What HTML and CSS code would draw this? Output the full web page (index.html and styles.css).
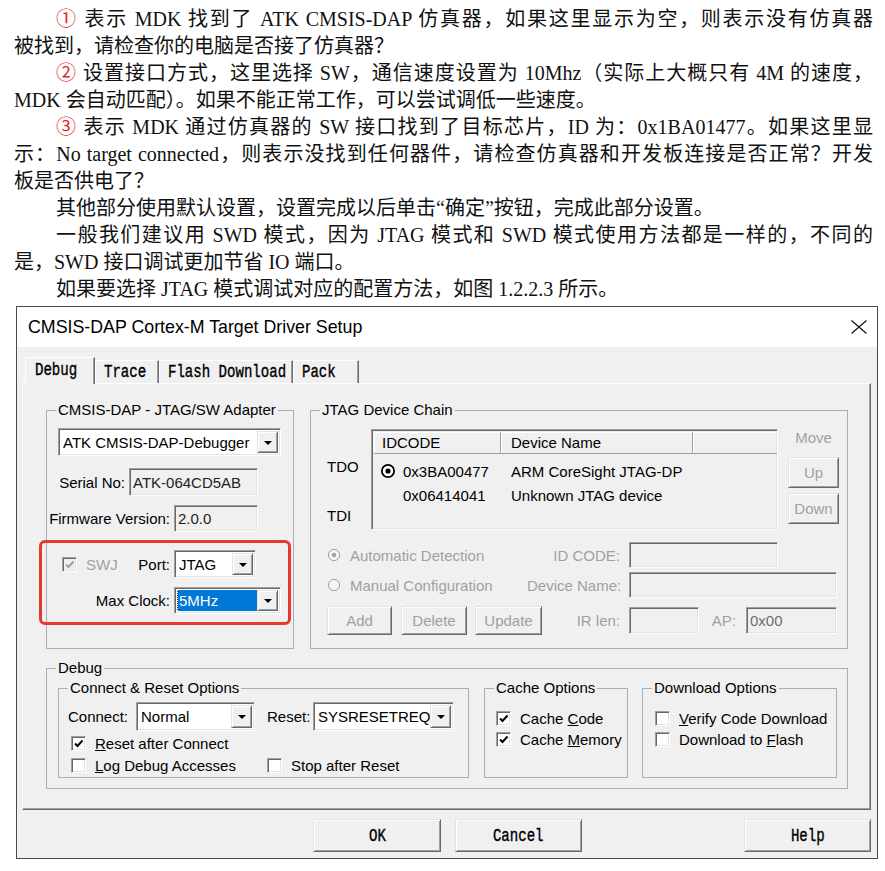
FILE: index.html
```html
<!DOCTYPE html>
<html lang="zh-CN">
<head>
    <meta charset="UTF-8">
    <meta name="viewport" content="width=device-width, initial-scale=1.0">
    <title>CMSIS-DAP 仿真器设置</title>
    <link rel="stylesheet" href="styles.css">
</head>
<body>
    <div class="doc">
        <p class="par">
            <span class="ln first"><span class="num">①</span> 表示 MDK 找到了 ATK CMSIS-DAP 仿真器，如果这里显示为空，则表示没有仿真器</span>
            <span class="ln end">被找到，请检查你的电脑是否接了仿真器？</span>
        </p>
        <p class="par">
            <span class="ln first"><span class="num">②</span> 设置接口方式，这里选择 SW，通信速度设置为 10Mhz（实际上大概只有 4M 的速度，</span>
            <span class="ln end">MDK 会自动匹配）。如果不能正常工作，可以尝试调低一些速度。</span>
        </p>
        <p class="par">
            <span class="ln first"><span class="num">③</span> 表示 MDK 通过仿真器的 SW 接口找到了目标芯片，ID 为：0x1BA01477。如果这里显</span>
            <span class="ln">示：No target connected，则表示没找到任何器件，请检查仿真器和开发板连接是否正常？开发</span>
            <span class="ln end">板是否供电了？</span>
        </p>
        <p class="par">
            <span class="ln first end">其他部分使用默认设置，设置完成以后单击“确定”按钮，完成此部分设置。</span>
        </p>
        <p class="par">
            <span class="ln first">一般我们建议用 SWD 模式，因为 JTAG 模式和 SWD 模式使用方法都是一样的，不同的</span>
            <span class="ln end">是，SWD 接口调试更加节省 IO 端口。</span>
        </p>
        <p class="par">
            <span class="ln first end">如果要选择 JTAG 模式调试对应的配置方法，如图 1.2.2.3 所示。</span>
        </p>
    </div>

    <div class="dlg">
        <div class="titlebar">
            <span>CMSIS-DAP Cortex-M Target Driver Setup</span>
            <svg class="close" width="16" height="14" viewBox="0 0 16 14">
                <path d="M0.5 0.5 L15.5 13.5 M15.5 0.5 L0.5 13.5" stroke="#111" stroke-width="1.2" fill="none"/>
            </svg>
        </div>

        <div class="dbody">
            <div class="tabs">
                <div class="tab on t-debug"><span class="mono">Debug</span></div>
                <div class="tab t-trace"><span class="mono">Trace</span></div>
                <div class="tab t-flash"><span class="mono">Flash Download</span></div>
                <div class="tab t-pack"><span class="mono">Pack</span></div>
            </div>

            <div class="panel">
                <div class="top">
                    <!-- adapter -->
                    <fieldset class="grp g-adapter">
                        <legend>CMSIS-DAP - JTAG/SW Adapter</legend>
                        <div class="combo cb-adapter"><span class="val">ATK CMSIS-DAP-Debugger</span><span class="drop"></span></div>
                        <div class="frow r-serial">
                            <span class="lbl l-serial">Serial No:</span>
                            <span class="field f-serial">ATK-064CD5AB</span>
                        </div>
                        <div class="frow r-fw">
                            <span class="lbl l-wide">Firmware Version:</span>
                            <span class="field f-fw">2.0.0</span>
                        </div>
                        <div class="clock">
                            <div class="frow r-port">
                                <span class="swj">
                                    <span class="chk dis">
                                        <svg width="11" height="11" viewBox="0 0 11 11"><path d="M2 5.5 L4.5 8 L9.5 2.5" fill="none" stroke="#a0a0a0" stroke-width="2"/></svg>
                                    </span>
                                    <span class="gray swj-t">SWJ</span>
                                    <span class="port">Port:</span>
                                </span>
                                <div class="combo cb-port"><span class="val">JTAG</span><span class="drop"></span></div>
                            </div>
                            <div class="frow r-max">
                                <span class="lbl l-wide">Max Clock:</span>
                                <div class="combo cb-clock"><span class="val"><span class="sel">5MHz</span></span><span class="drop"></span></div>
                            </div>
                            <div class="mark"></div>
                        </div>
                    </fieldset>

                    <!-- jtag chain -->
                    <fieldset class="grp g-chain">
                        <legend>JTAG Device Chain</legend>
                        <div class="chain">
                            <div class="tap">
                                <div class="tdo">TDO</div>
                                <div class="tdi">TDI</div>
                            </div>
                            <div class="list">
                                <div class="lhead">
                                    <span class="hc c1">IDCODE</span>
                                    <span class="hc c2">Device Name</span>
                                    <span class="hc c3"></span>
                                </div>
                                <div class="lrow">
                                    <span class="c1 rad">
                                        <svg width="16" height="16" viewBox="0 0 16 16"><circle cx="8" cy="8" r="6.1" fill="#fff" stroke="#000" stroke-width="1.8"/><circle cx="8" cy="8" r="2.6" fill="#000"/></svg>
                                        0x3BA00477
                                    </span>
                                    <span class="c2">ARM CoreSight JTAG-DP</span>
                                </div>
                                <div class="lrow">
                                    <span class="c1 ind">0x06414041</span>
                                    <span class="c2">Unknown JTAG device</span>
                                </div>
                            </div>
                            <div class="move">
                                <div class="gray move-l">Move</div>
                                <div class="btn mv up gray">Up</div>
                                <div class="btn mv down gray">Down</div>
                            </div>
                        </div>

                        <div class="opts">
                            <div class="orow r-a">
                                <span class="oleft">
                                    <svg width="14" height="14" viewBox="0 0 14 14"><circle cx="7" cy="7" r="5.6" fill="#f4f4f4" stroke="#a0a0a0"/><circle cx="7" cy="7" r="2.2" fill="#a0a0a0"/></svg>
                                    <span class="gray opt-t">Automatic Detection</span>
                                </span>
                                <span class="olbl gray">ID CODE:</span>
                                <span class="field f-id"></span>
                            </div>
                            <div class="orow r-b">
                                <span class="oleft">
                                    <svg width="14" height="14" viewBox="0 0 14 14"><circle cx="7" cy="7" r="5.6" fill="#f4f4f4" stroke="#a0a0a0"/></svg>
                                    <span class="gray opt-t">Manual Configuration</span>
                                </span>
                                <span class="olbl gray">Device Name:</span>
                                <span class="field f-name"></span>
                            </div>
                            <div class="orow r-c">
                                <span class="btn gray b-add">Add</span>
                                <span class="btn gray b-del">Delete</span>
                                <span class="btn gray b-upd">Update</span>
                                <span class="olbl gray l-ir">IR len:</span>
                                <span class="field f-ir"></span>
                                <span class="olbl gray l-ap">AP:</span>
                                <span class="field f-ap">0x00</span>
                            </div>
                        </div>
                    </fieldset>
                </div>

                <!-- debug -->
                <fieldset class="grp g-debug">
                    <legend>Debug</legend>
                    <div class="drow">
                        <fieldset class="grp g-conn">
                            <legend>Connect &amp; Reset Options</legend>
                            <div class="crow1">
                                <span class="l-conn">Connect:</span>
                                <div class="combo cb-conn"><span class="val">Normal</span><span class="drop"></span></div>
                                <span class="l-reset">Reset:</span>
                                <div class="combo cb-reset"><span class="val">SYSRESETREQ</span><span class="drop"></span></div>
                            </div>
                            <div class="crow c-r2">
                                <span class="chk">
                                    <svg width="11" height="11" viewBox="0 0 11 11"><path d="M2 5.5 L4.5 8 L9.5 2.5" fill="none" stroke="#000" stroke-width="2"/></svg>
                                </span>
                                <span class="ct"><u>R</u>eset after Connect</span>
                            </div>
                            <div class="crow c-r3">
                                <span class="cell">
                                    <span class="chk"></span>
                                    <span class="ct"><u>L</u>og Debug Accesses</span>
                                </span>
                                <span class="chk"></span>
                                <span class="ct">Stop after Reset</span>
                            </div>
                        </fieldset>

                        <fieldset class="grp g-cache">
                            <legend>Cache Options</legend>
                            <div class="crow k1">
                                <span class="chk">
                                    <svg width="11" height="11" viewBox="0 0 11 11"><path d="M2 5.5 L4.5 8 L9.5 2.5" fill="none" stroke="#000" stroke-width="2"/></svg>
                                </span>
                                <span class="ct">Cache <u>C</u>ode</span>
                            </div>
                            <div class="crow k2">
                                <span class="chk">
                                    <svg width="11" height="11" viewBox="0 0 11 11"><path d="M2 5.5 L4.5 8 L9.5 2.5" fill="none" stroke="#000" stroke-width="2"/></svg>
                                </span>
                                <span class="ct">Cache <u>M</u>emory</span>
                            </div>
                        </fieldset>

                        <fieldset class="grp g-down">
                            <legend>Download Options</legend>
                            <div class="crow k1">
                                <span class="chk"></span>
                                <span class="ct"><u>V</u>erify Code Download</span>
                            </div>
                            <div class="crow k2">
                                <span class="chk"></span>
                                <span class="ct">Download to <u>F</u>lash</span>
                            </div>
                        </fieldset>
                    </div>
                </fieldset>
            </div>

            <div class="btns">
                <div class="btn dbtn b-ok"><span class="mono">OK</span></div>
                <div class="btn dbtn b-cancel"><span class="mono">Cancel</span></div>
                <div class="btn dbtn b-help"><span class="mono">Help</span></div>
            </div>
        </div>
    </div>
</body>
</html>
```

FILE: styles.css
```css
body {
    margin: 0;
    background: #fff;
}

/* document text above the dialog */
.doc {
    width: 859px;
    margin-left: 14px;
    padding-top: 6px;
    font-family: "Liberation Serif", "Noto Sans CJK SC", serif;
    font-size: 20px;
    line-height: 27px;
    color: #111;
}
.par {
    margin: 0;
}
.ln {
    display: block;
    text-align: justify;
    text-align-last: justify;
}
.ln.first {
    text-indent: 42px;
}
.ln.end {
    text-align-last: left;
}
.num {
    color: #e3262b;
}

/* dialog */
.dlg {
    width: 862px;
    margin: 3px 0 0 16px;
    box-sizing: border-box;
    border: 1px solid #4a4a4a;
    background: #f0f0f0;
    font-family: "Liberation Sans", Arial, sans-serif;
    font-size: 15px;
    color: #000;
}
.titlebar {
    height: 40px;
    background: #fff;
    display: flex;
    align-items: center;
    justify-content: space-between;
    padding: 0 10px 0 11px;
    font-size: 17.8px;
}
.dbody {
    padding: 10px 6px 6px 5px;
}
.gray {
    color: #a0a0a0;
}
.mono {
    display: inline-block;
    font-family: "Liberation Mono", monospace;
    font-size: 19px;
    -webkit-text-stroke: 0.4px #000;
    transform: scaleX(0.74);
    white-space: nowrap;
}

/* tabs */
.tabs {
    display: flex;
    align-items: flex-end;
    height: 26px;
    padding-left: 3px;
}
.tab {
    position: relative;
    box-sizing: border-box;
    height: 23px;
    border: 1px solid;
    border-bottom: none;
    border-color: #fff #696969 transparent #fff;
    box-shadow: inset -1px 0 0 #a0a0a0;
    background: #f0f0f0;
    padding-left: 8px;
    line-height: 22px;
}
.tab .mono {
    transform-origin: left center;
}
.tab.on {
    height: 27px;
    margin-bottom: -1px;
    line-height: 24px;
    padding-left: 9px;
}
.t-debug { width: 70px; }
.t-trace { width: 64px; }
.t-flash { width: 134px; }
.t-pack { width: 66px; }

.panel {
    height: 427px;
    box-sizing: border-box;
    border: 1px solid;
    border-color: #fff #696969 #696969 #fff;
    box-shadow: inset -1px -1px 0 #a0a0a0;
    padding: 17px 0 0 23px;
}
.top {
    display: flex;
    gap: 16px;
}

/* group boxes */
.grp {
    margin: 0;
    padding: 0;
    min-width: 0;
    box-sizing: border-box;
    border: 1px solid #adadad;
}
.grp legend {
    margin-left: 9px;
    padding: 0 2px;
    line-height: 18px;
}
.g-adapter { width: 248px; height: 248px; }
.g-chain { width: 538px; height: 248px; }
.g-debug { width: 802px; height: 130px; margin-top: 10px; }

/* edit boxes and combos */
.field,
.combo,
.list {
    box-sizing: border-box;
    border: 1px solid;
    border-color: #a0a0a0 #fff #fff #a0a0a0;
    box-shadow: inset 1px 1px 0 #696969, inset -1px -1px 0 #e3e3e3;
}
.field {
    display: flex;
    align-items: center;
    padding-left: 3px;
    background: #f0f0f0;
    color: #222;
}
.combo {
    display: flex;
    padding: 2px;
    background: #fff;
}
.combo .val {
    flex: 1;
    display: flex;
    align-items: center;
    padding-left: 2px;
    white-space: nowrap;
    overflow: hidden;
}
.drop {
    width: 21px;
    box-sizing: border-box;
    border: 1px solid;
    border-color: #e3e3e3 #696969 #696969 #e3e3e3;
    box-shadow: inset 1px 1px 0 #fff, inset -1px -1px 0 #a0a0a0;
    background: #f0f0f0;
    display: flex;
    align-items: center;
    justify-content: center;
}
.drop::after {
    content: "";
    border-left: 4px solid transparent;
    border-right: 4px solid transparent;
    border-top: 4px solid #000;
    margin-top: 1px;
}
.sel {
    display: flex;
    align-items: center;
    align-self: stretch;
    flex: 1;
    margin-left: -1px;
    padding-left: 1px;
    background: #0078d7;
    color: #fff;
    outline: 1px dotted #222;
}

/* adapter group */
.cb-adapter { margin: 9px 0 0 11px; width: 223px; height: 28px; }
.frow {
    display: flex;
    align-items: center;
    gap: 4px;
}
.lbl { text-align: right; white-space: nowrap; }
.r-serial { margin-top: 12px; }
.l-serial { width: 78px; }
.f-serial { width: 129px; height: 28px; }
.r-fw { margin-top: 9px; }
.l-wide { width: 123px; }
.f-fw { width: 84px; height: 27px; }
.clock {
    position: relative;
    margin-top: 18px;
}
.r-port { height: 28px; }
.swj {
    width: 123px;
    display: flex;
    align-items: center;
}
.swj .chk { margin-left: 15px; }
.swj-t { margin-left: 9px; }
.port { margin-left: auto; }
.cb-port { width: 82px; height: 28px; }
.r-max { margin-top: 9px; }
.cb-clock { width: 107px; height: 27px; }
.mark {
    position: absolute;
    top: -10px;
    left: -8px;
    right: 2px;
    bottom: -11px;
    border: 3px solid #e8382e;
    border-radius: 6px;
}

/* check boxes */
.chk {
    width: 15px;
    height: 15px;
    flex: none;
    box-sizing: border-box;
    border: 1px solid;
    border-color: #a0a0a0 #fff #fff #a0a0a0;
    box-shadow: inset 1px 1px 0 #696969, inset -1px -1px 0 #e3e3e3;
    background: #fff;
    display: flex;
    align-items: center;
    justify-content: center;
}
.chk.dis {
    background: #f0f0f0;
}

/* jtag chain */
.chain {
    display: flex;
    margin-top: 10px;
    padding-left: 16px;
}
.tap { width: 44px; line-height: 18px; }
.tdo { margin-top: 29px; }
.tdi { margin-top: 31px; }
.list {
    width: 407px;
    height: 101px;
    padding: 2px 0 0 2px;
    background: #f0f0f0;
}
.lhead {
    display: flex;
    height: 21px;
    border-bottom: 1px solid #a0a0a0;
}
.hc {
    box-sizing: border-box;
    display: flex;
    align-items: center;
    padding-left: 8px;
    border-right: 1px solid #a0a0a0;
    box-shadow: inset 1px 1px 0 #fff;
}
.c1 { width: 127px; box-sizing: border-box; }
.c2 { width: 192px; box-sizing: border-box; padding-left: 10px; }
.hc.c3 { flex: 1; border-right: none; }
.lrow {
    display: flex;
    align-items: center;
    height: 24px;
    white-space: nowrap;
}
.lhead + .lrow { margin-top: 5px; }
.rad {
    display: flex;
    align-items: center;
    gap: 7px;
    padding-left: 6px;
}
.ind { padding-left: 29px; }
.move {
    margin-left: 10px;
    width: 51px;
    display: flex;
    flex-direction: column;
}
.move-l {
    text-align: center;
    line-height: 18px;
}
.mv { height: 31px; }
.up { margin-top: 10px; }
.down { margin-top: 5px; }

/* raised buttons */
.btn {
    box-sizing: border-box;
    border: 1px solid;
    border-color: #e3e3e3 #696969 #696969 #e3e3e3;
    box-shadow: inset 1px 1px 0 #fff, inset -1px -1px 0 #a0a0a0;
    background: #f0f0f0;
    display: flex;
    align-items: center;
    justify-content: center;
    white-space: nowrap;
}

.opts { padding-left: 16px; }
.orow {
    display: flex;
    align-items: center;
    height: 26px;
}
.r-a { margin-top: 12px; }
.r-b { margin-top: 4px; }
.r-c { margin-top: 7px; height: 30px; }
.oleft {
    width: 200px;
    display: flex;
    align-items: center;
    white-space: nowrap;
}
.opt-t { margin-left: 9px; }
.olbl {
    width: 93px;
    text-align: right;
    white-space: nowrap;
    margin-right: 9px;
}
.f-id { width: 149px; height: 26px; }
.f-name { width: 208px; height: 26px; }
.b-add { width: 65px; height: 29px; }
.b-del { width: 66px; height: 29px; margin-left: 9px; }
.b-upd { width: 67px; height: 29px; margin-left: 8px; }
.l-ir { width: 78px; }
.f-ir { width: 70px; height: 27px; }
.l-ap { width: 37px; margin-right: 10px; }
.f-ap { width: 91px; height: 27px; color: #6d6d6d; }

/* debug group */
.drow {
    display: flex;
    margin: 2px 0 0 11px;
}
.g-conn { width: 411px; height: 99px; }
.g-cache { width: 144px; height: 99px; margin-left: 15px; }
.g-down { width: 195px; height: 99px; margin-left: 14px; }
.crow1 {
    display: flex;
    align-items: center;
    height: 29px;
    margin-top: 5px;
    padding-left: 9px;
}
.l-conn { width: 68px; }
.cb-conn { width: 119px; height: 29px; }
.l-reset { width: 46px; margin-left: 12px; }
.cb-reset { width: 141px; height: 29px; }
.crow {
    display: flex;
    align-items: center;
    height: 18px;
    padding-left: 12px;
    white-space: nowrap;
}
.ct { margin-left: 9px; }
.c-r2 { margin-top: 3px; }
.c-r3 { margin-top: 4px; }
.cell {
    width: 196px;
    display: flex;
    align-items: center;
}
.g-cache .crow { padding-left: 11px; }
.k1 { margin-top: 12px; }
.k2 { margin-top: 3px; }

/* bottom buttons */
.btns {
    display: flex;
    margin-top: 9px;
}
.dbtn { height: 33px; width: 127px; }
.b-ok { width: 128px; margin-left: 291px; }
.b-cancel { margin-left: 14px; }
.b-help { margin-left: auto; }
```
